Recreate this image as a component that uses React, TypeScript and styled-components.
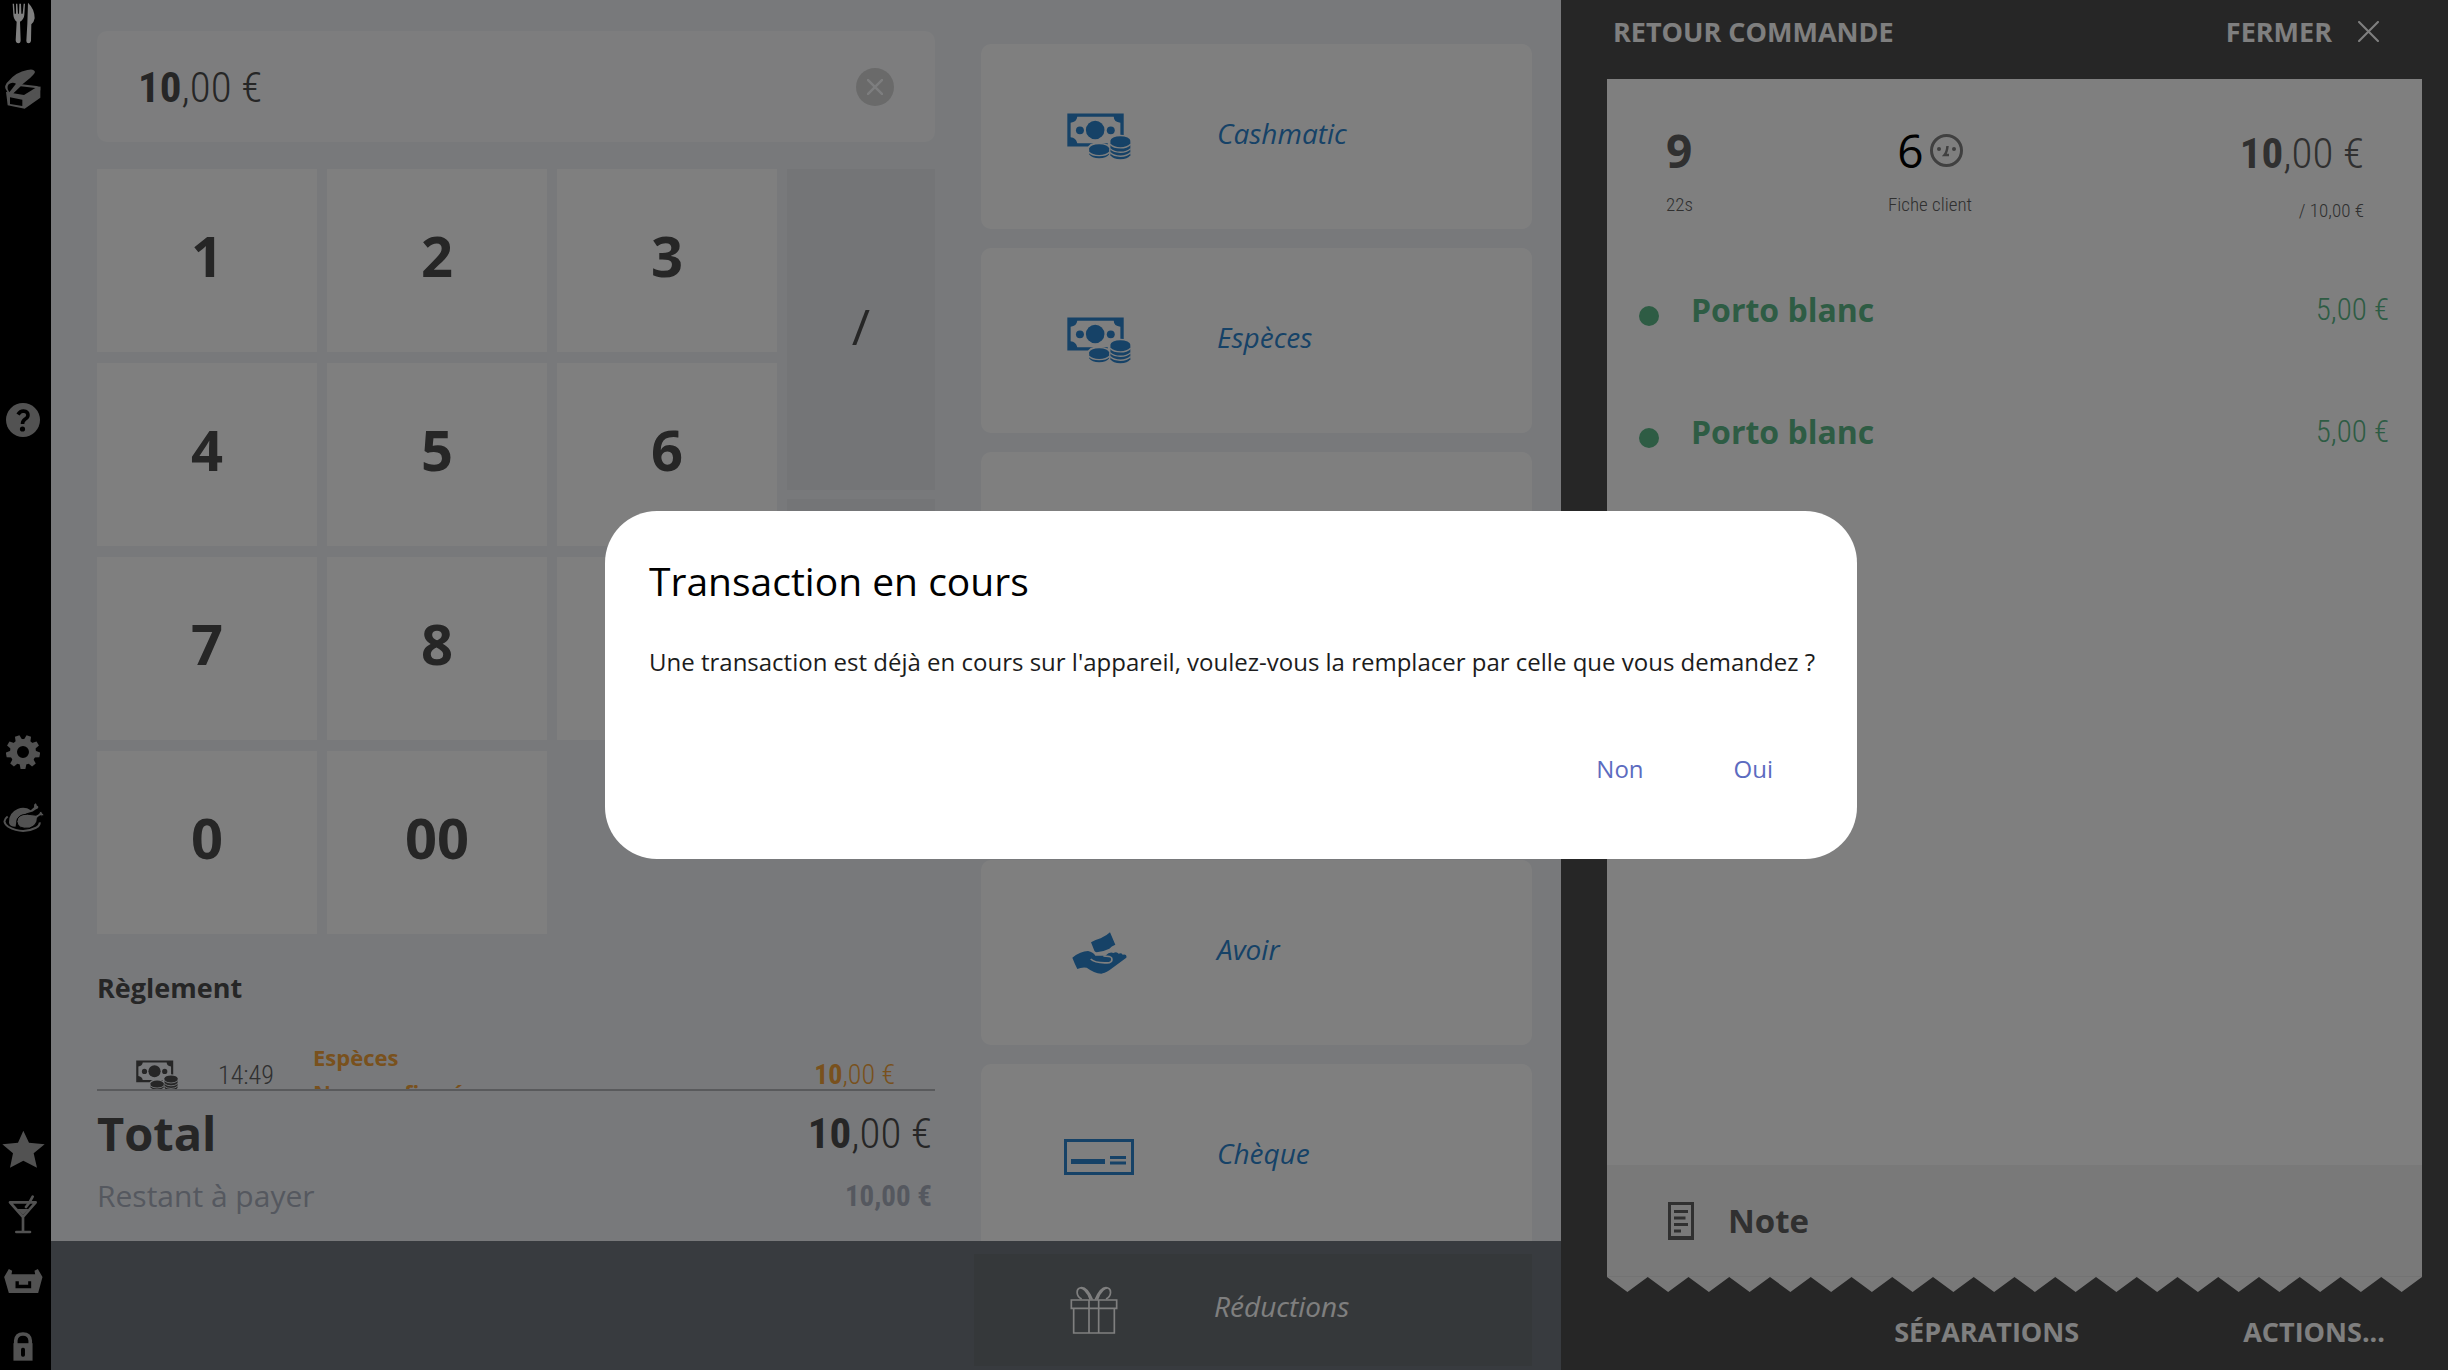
import React from "react";
import styled, { createGlobalStyle } from "styled-components";

const sans = '"Open Sans", "Noto Sans", sans-serif';
const narrow = '"Roboto Condensed", "Open Sans", sans-serif';

const colors = {
  ink: "#4c4c4c",
  inkSoft: "#606060",
  muted: "#808080",
  page: "#f0f3f7",
  panel: "#4c4c4c",
  blue: "#2c84ce",
  green: "#5cb888",
  orange: "#f2a23a",
  grey: "#a4a4a4",
};

const GlobalStyle = createGlobalStyle`
  *, *::before, *::after { box-sizing: border-box; }
  body { margin: 0; background: #000; font-family: ${sans}; color: ${colors.ink}; }
  button { font: inherit; color: inherit; border: 0; margin: 0; padding: 0; background: none; cursor: pointer; }
  b { font-weight: 700; }
  h2, p, ul { margin: 0; padding: 0; list-style: none; }
  svg { display: block; flex: none; }
`;

/* ---------- Layout ---------- */

const Screen = styled.div`
  display: grid;
  grid-template-columns: 51px minmax(0, 1fr) 887px;
  height: 100vh;
  overflow: hidden;
`;

const Rail = styled.nav`
  display: flex;
  flex-direction: column;
  justify-content: space-between;
  margin: -10px 0;
  padding-right: 5px;
  background: #000;
  color: ${colors.grey};
`;

const RailGroup = styled.div`
  display: flex;
  flex-direction: column;
`;

const RailButton = styled.button<{ $active?: boolean }>`
  display: flex;
  align-items: center;
  justify-content: center;
  height: 66px;
  color: ${(p) => (p.$active ? "#fff" : "inherit")};
`;

const Checkout = styled.main`
  display: grid;
  grid-template-rows: minmax(0, 1fr) 129px;
  min-height: 0;
  background: ${colors.page};
`;

const Columns = styled.div`
  display: grid;
  grid-template-columns: 838fr 551fr;
  grid-template-rows: minmax(0, 1fr);
  gap: 46px;
  padding: 0 29px 0 46px;
  min-height: 0;
`;

const Entry = styled.section`
  display: flex;
  flex-direction: column;
  min-height: 0;
  padding-top: 31px;
`;

const Display = styled.div`
  display: flex;
  align-items: center;
  justify-content: space-between;
  flex: none;
  height: 111px;
  padding: 0 41px;
  border-radius: 10px;
  background: #fafbfd;
`;

const Amount = styled.span<{ $size: number; $color?: string; $weight?: number }>`
  font-family: ${narrow};
  font-size: ${(p) => p.$size}px;
  font-weight: ${(p) => p.$weight ?? 300};
  line-height: 48px;
  white-space: nowrap;
  color: ${(p) => p.$color ?? colors.ink};
`;

const ClearButton = styled.button`
  display: flex;
  align-items: center;
  justify-content: center;
  width: 38px;
  height: 38px;
  border-radius: 50%;
  background: #d4d4d4;
  color: #fafbfd;
`;

const Keypad = styled.div`
  display: flex;
  flex: none;
  gap: 10px;
  margin-top: 27px;
`;

const Digits = styled.div`
  display: grid;
  flex: 680;
  grid-template-columns: repeat(3, 1fr);
  grid-auto-rows: 183px;
  gap: 11px 10px;
`;

const DigitKey = styled.button`
  background: #fff;
  font-size: 56px;
  font-weight: 700;
  line-height: 64px;
  padding-bottom: 12px;
`;

const SideKeys = styled.div`
  display: flex;
  flex: 148;
  flex-direction: column;
  gap: 9px;
`;

const SideKey = styled.button`
  height: 321px;
  padding-bottom: 8px;
  background: #e9ebef;
  font-size: 50px;
  font-weight: 400;
`;

const SectionTitle = styled.h2`
  flex: none;
  margin-top: 36px;
  font-size: 27px;
  line-height: 36px;
  font-weight: 700;
`;

const Payments = styled.ul`
  flex: 1;
  min-height: 0;
  overflow: hidden;
  border-bottom: 2px solid #b2b5b9;
`;

const Payment = styled.li`
  display: flex;
  align-items: center;
  gap: 40px;
  padding: 34px 40px 0 39px;
`;

const PaymentTime = styled.time`
  width: 55px;
  font-family: ${narrow};
  font-size: 26px;
  font-weight: 300;
  line-height: 36px;
  color: ${colors.inkSoft};
`;

const PaymentLabel = styled.div`
  flex: 1;
  font-size: 22px;
  font-weight: 700;
  line-height: 35px;
  color: ${colors.orange};
`;

const Totals = styled.div`
  flex: none;
  display: flex;
  flex-direction: column;
  gap: 13px;
  padding: 12px 3px 25px 0;
`;

const TotalRow = styled.div<{ $main?: boolean }>`
  display: flex;
  align-items: center;
  justify-content: space-between;
  height: ${(p) => (p.$main ? 60 : 40)}px;
  font-size: ${(p) => (p.$main ? 47 : 30)}px;
  font-weight: ${(p) => (p.$main ? 700 : 400)};
  line-height: ${(p) => (p.$main ? 60 : 40)}px;
  color: ${(p) => (p.$main ? colors.ink : "#aab0bf")};
`;

const Methods = styled.section`
  display: flex;
  flex-direction: column;
  gap: 19px;
  min-height: 0;
  overflow: hidden;
  padding-top: 44px;
`;

const MethodCard = styled.button`
  display: grid;
  flex: none;
  grid-template-columns: 236px 1fr;
  align-items: center;
  height: 185px;
  border-radius: 10px;
  background: #fff;
  color: ${colors.blue};
  text-align: left;
`;

const IconCell = styled.span`
  display: flex;
  justify-content: center;
`;

const MethodLabel = styled.span`
  padding-bottom: 8px;
  font-size: 28px;
  font-style: italic;
  line-height: 36px;
`;

const BottomBar = styled.footer`
  display: grid;
  grid-template-columns: 831fr 558fr;
  gap: 46px;
  padding: 13px 29px 4px 46px;
  background: #70767f;
`;

const DiscountButton = styled.button`
  display: grid;
  grid-column: 2;
  grid-template-columns: 240px 1fr;
  align-items: center;
  background: #6a7074;
  color: #fff;
  text-align: left;
`;

/* ---------- Order panel ---------- */

const OrderPanel = styled.aside`
  display: flex;
  flex-direction: column;
  min-height: 0;
  padding: 0 26px 0 46px;
  background: ${colors.panel};
`;

const PanelHeader = styled.header`
  display: flex;
  align-items: center;
  justify-content: space-between;
  flex: none;
  height: 63px;
  margin-bottom: 16px;
  padding: 0 43px 0 6px;
  color: #fff;
`;

const PanelButton = styled.button`
  display: flex;
  align-items: center;
  gap: 26px;
  font-size: 27px;
  font-weight: 700;
  line-height: 36px;
  white-space: nowrap;
`;

const Receipt = styled.section`
  display: flex;
  flex: 1;
  flex-direction: column;
  min-height: 0;
  background: #fff;
`;

const ReceiptHead = styled.div`
  display: grid;
  grid-template-columns: 223px 82px 1fr;
  padding: 47px 58px 26px 59px;
`;

const HeadCell = styled.div<{ $align?: string; $low?: boolean }>`
  display: flex;
  flex-direction: column;
  align-items: ${(p) => p.$align ?? "flex-start"};
  gap: ${(p) => (p.$low ? 22 : 19)}px;
  padding-top: ${(p) => (p.$low ? 3 : 0)}px;
`;

const HeadValue = styled.div<{ $strong?: boolean }>`
  display: flex;
  align-items: center;
  gap: 6px;
  font-size: 46px;
  font-weight: ${(p) => (p.$strong ? 700 : 400)};
  line-height: 48px;
  color: ${(p) => (p.$strong ? colors.inkSoft : "#000")};
`;

const HeadNote = styled.span`
  font-family: ${narrow};
  font-size: 19px;
  font-weight: 300;
  line-height: 24px;
  white-space: nowrap;
  color: ${colors.inkSoft};
`;

const Lines = styled.ul`
  flex: 1;
  min-height: 0;
`;

const Line = styled.li`
  display: flex;
  align-items: center;
  height: 122px;
  padding: 0 33px 0 32px;
  color: ${colors.green};
`;

const Dot = styled.span`
  width: 20px;
  height: 20px;
  margin: 12px 32px 0 0;
  border-radius: 50%;
  background: currentColor;
`;

const LineName = styled.span`
  flex: 1;
  font-size: 32px;
  font-weight: 700;
  line-height: 42px;
`;

const NoteButton = styled.button`
  display: flex;
  align-items: center;
  flex: none;
  gap: 34px;
  height: 112px;
  padding-left: 61px;
  border-bottom: 1px solid #e6e6e6;
  background: #f2f2f2;
  color: ${colors.inkSoft};
  font-size: 33px;
  font-weight: 700;
  line-height: 42px;
`;

const PanelFooter = styled.footer`
  display: flex;
  align-items: center;
  justify-content: flex-end;
  flex: none;
  gap: 164px;
  height: 78px;
  padding: 2px 37px 0 0;
  color: #fff;
`;

/* ---------- Dialog ---------- */

const Backdrop = styled.div`
  position: fixed;
  inset: 0;
  display: flex;
  align-items: center;
  justify-content: center;
  padding-left: 14px;
  background: rgba(0, 0, 0, 0.5);
`;

const Dialog = styled.div`
  width: 1252px;
  padding: 40px 44px 66px;
  border-radius: 52px;
  background: #fff;
  color: #000;
`;

const DialogTitle = styled.h2`
  font-size: 39px;
  font-weight: 400;
  line-height: 60px;
`;

const DialogText = styled.p`
  margin-top: 33px;
  font-size: 24px;
  line-height: 36px;
  white-space: nowrap;
  color: #1c1c1c;
`;

const DialogActions = styled.div`
  display: flex;
  justify-content: flex-end;
  gap: 10px;
  margin-top: 65px;
`;

const DialogButton = styled.button`
  height: 48px;
  padding: 0 40px;
  font-size: 24px;
  line-height: 48px;
  color: #5c6bc0;
`;

/* ---------- Icons ---------- */

const CutleryIcon = () => (
  <svg width="23" height="42" viewBox="36 7 69 126" fill="currentColor">
    <path d="M38 12L40 45Q41 59 50 66L47 122Q48 131 55 131Q62 131 62 122L60 66Q72 59 73 45L75 12H71L68 42H64L63 12H58L57 42H54L52 12H48V42H44L42 12Z" />
    <path d="M84 9Q104 28 104 56Q102 68 94 74L93 124Q91 131 86 131Q79 131 79 124L82 72Z" />
  </svg>
);

const BoxIcon = () => (
  <svg width="36" height="40" viewBox="17 206 108 120">
    <path d="M20 274L76 290L123 258V292L76 325L25 315Z" fill="currentColor" />
    <path d="M24 268L66 252L112 257L123 260V270L76 296L24 284Z" fill="currentColor" />
    <path d="M42 279L64 258L108 263L74 284Z" fill="#000" />
    <path d="M32 291L69 298V317L32 311Z" fill="#000" />
    <path d="M28 242Q50 215 84 209Q104 204 107 215Q104 224 84 240L64 256L36 284Q14 268 18 256Q20 248 28 242Z" fill="currentColor" />
    <path d="M30 276Q20 262 28 252Q38 244 50 250Z" fill="#000" />
  </svg>
);

const HelpIcon = () => (
  <svg width="34" height="34" viewBox="0 0 34 34">
    <circle cx="17" cy="17" r="17" fill="currentColor" />
    <path d="M12 11.5Q14 8 17.500 8Q22 8.300 22 12Q22 14.500 19 16.300Q16.500 18 16.500 21" fill="none" stroke="#000" strokeWidth="3.600" />
    <circle cx="16.500" cy="26" r="2.600" fill="#000" />
  </svg>
);

const GearIcon = () => (
  <svg width="34" height="34" viewBox="-17 -17 34 34">
    {[0, 1, 2, 3, 4, 5, 6, 7, 8].map((i) => (
      <path key={i} d="M-3.800 10H3.800L2.400 17H-2.400Z" fill="currentColor" transform={`rotate(${i * 40})`} />
    ))}
    <circle r="9.500" fill="none" stroke="currentColor" strokeWidth="7" />
  </svg>
);

const ChickenIcon = () => (
  <svg width="41" height="31" viewBox="8 1264 124 92">
    <path d="M22 1307Q2 1322 24 1338Q66 1362 108 1341Q120 1334 119 1325" fill="none" stroke="currentColor" strokeWidth="6" />
    <path d="M26 1326Q24 1296 52 1284Q74 1276 92 1288L102 1279Q100 1270 106 1267Q110 1268 110 1274Q118 1277 113 1283Q108 1284 98 1292L80 1297L50 1314L46 1338Q28 1338 26 1326Z" fill="currentColor" />
    <path d="M50 1322Q52 1300 82 1300Q98 1302 108 1303L117 1298Q117 1290 124 1291Q126 1296 131 1301Q130 1308 120 1305L112 1311Q112 1334 88 1342Q52 1346 50 1322Z" fill="currentColor" stroke="#000" strokeWidth="3" />
  </svg>
);

const StarIcon = () => (
  <svg width="43" height="38" viewBox="6 28 129 114">
    <path d="M70 30L87 66L134 71L101 98L111 141L70 120L30 141L39 98L7 71L54 66Z" fill="currentColor" />
  </svg>
);

const CocktailIcon = () => (
  <svg width="30" height="39" viewBox="26 224 90 117" fill="none" stroke="currentColor" strokeWidth="8" strokeLinecap="round" strokeLinejoin="round">
    <path d="M32 246H109L71 290ZM71 290V334M51 335H92" />
    <path d="M100 229L90 247L80 260" />
    <path d="M54 266H88L71 284Z" fill="currentColor" stroke="none" />
  </svg>
);

const BasketIcon = () => (
  <svg width="39" height="24" viewBox="13 446 116 72">
    <path d="M13 470L27 446L37 451L35 462H106L104 451L114 446L128 470L115 518H27Z" fill="currentColor" />
    <path d="M47 483H57V493H85V483H94V504H47Z" fill="#000" />
  </svg>
);

const LockIcon = () => (
  <svg width="20" height="29" viewBox="41 636 60 88">
    <path d="M49 674V662Q51 642 71 642Q91 642 93 662V674" fill="none" stroke="currentColor" strokeWidth="11" />
    <path d="M42 670H100V723H42Z" fill="currentColor" />
    <rect x="65" y="684" width="12" height="27" rx="5" fill="#000" />
  </svg>
);

const CrossIcon = ({ size, weight }: { size: number; weight: number }) => (
  <svg width={size} height={size} viewBox="0 0 20 20" stroke="currentColor" strokeWidth={weight} strokeLinecap="round">
    <path d="M1 1L19 19M19 1L1 19" />
  </svg>
);

const CashIcon = ({ width = 64, paper = "#fff" }: { width?: number; paper?: string }) => (
  <svg width={width} height={Math.round((width * 47) / 64)} viewBox="51 39 193 141">
    <path d="M52 40H222V140H52Z" fill="currentColor" />
    <path d="M82 50H192Q192 66 212 68V112Q196 112 192 130H82Q78 114 62 112V68Q80 66 82 50Z" fill={paper} />
    <circle cx="136" cy="90" r="28" fill="currentColor" />
    <circle cx="90" cy="91" r="12" fill="currentColor" />
    <circle cx="183" cy="91" r="12" fill="currentColor" />
    <path d="M174 122Q178 104 212 104Q240 104 250 122V182H112V146Q118 126 148 128Q164 128 174 134Z" fill={paper} />
    <path d="M182 124V166Q190 178 212 178T242 166V124Z" fill="currentColor" />
    <path d="M118 146V164Q126 175 148 175T178 164V146Z" fill="currentColor" />
    <g fill="none" stroke={paper} strokeWidth="4">
      <path d="M181 133Q192 144 212 144T243 133M181 146Q192 157 212 157T243 146M181 158Q192 169 212 169T243 158" />
      <path d="M117 157Q126 167 148 167T179 157" />
    </g>
    <ellipse cx="212" cy="122" rx="30" ry="13" fill="currentColor" />
    <ellipse cx="148" cy="146" rx="30" ry="13" fill="currentColor" />
  </svg>
);

const VoucherIcon = () => (
  <svg width="55" height="42" viewBox="64 61 165 126">
    <path d="M121 92Q134 84 150 80Q168 72 178 62L194 99Q182 104 176 111Q160 119 138 122Q132 122 129 112Z" fill="currentColor" />
    <path d="M65 138Q90 118 112 118Q128 122 134 132H164Q178 118 188 124Q198 118 204 126Q212 122 216 129Q230 126 227 138L176 176Q160 186 152 186Q130 184 108 168Q92 166 80 172Q72 156 65 138Z" fill="currentColor" />
    <path d="M120 142Q134 156 176 153Q186 150 183 139Q180 133 158 133" fill="none" stroke="#fff" strokeWidth="5" />
  </svg>
);

const ChequeIcon = () => (
  <svg width="70" height="36" viewBox="0 0 70 36" fill="none" stroke="currentColor">
    <rect x="1.500" y="1.500" width="67" height="33" strokeWidth="3" />
    <path d="M7 22.500H41" strokeWidth="5" />
    <path d="M46 18.500H62M46 24H62" strokeWidth="3" />
  </svg>
);

const GiftIcon = () => (
  <svg width="48" height="48" viewBox="61 1129 144 144" fill="none" stroke="currentColor" strokeWidth="5">
    <path d="M65 1171H201V1196H65ZM72 1196V1270H194V1196M118 1171V1270M147 1171V1270" />
    <path d="M122 1170C112 1142 98 1134 90 1135C80 1138 78 1160 96 1168M128 1170C118 1146 104 1130 90 1135" />
    <path d="M143 1170C153 1142 167 1134 175 1135C185 1138 187 1160 169 1168M137 1170C147 1146 161 1130 175 1135" />
  </svg>
);

const GuestIcon = () => (
  <svg width="33" height="33" viewBox="0 0 33 33" fill="none" stroke={colors.muted} strokeWidth="3">
    <circle cx="16.500" cy="16.500" r="15" />
    <path d="M17.500 12Q17 18 14.500 21H19" strokeWidth="2.500" />
    <circle cx="9" cy="15" r="2" fill={colors.muted} stroke="none" />
    <circle cx="24" cy="15" r="2" fill={colors.muted} stroke="none" />
  </svg>
);

const NoteIcon = () => (
  <svg width="26" height="38" viewBox="0 0 26 38" fill="none" stroke="currentColor">
    <path d="M1.500 1.500H24.500V36H1.500Z" strokeWidth="3" />
    <path d="M0 36H26" strokeWidth="4" />
    <path d="M6 9.500H20M6 16H17.500M6 22.500H20M6 29H13" strokeWidth="3" />
  </svg>
);

const TornEdge = () => {
  const teeth = Array.from({ length: 20 }, (_, i) => `L${i * 2 + 1} 1L${i * 2 + 2} 0`).join("");
  return (
    <svg width="100%" height="15" viewBox="0 0 40 1" preserveAspectRatio="none">
      <path d={`M0 0${teeth}Z`} fill="#f2f2f2" />
    </svg>
  );
};

/* ---------- Screen content ---------- */

const railGroups = [
  [
    { name: "Service", Icon: CutleryIcon, active: true },
    { name: "Tiroir-caisse", Icon: BoxIcon },
  ],
  [{ name: "Aide", Icon: HelpIcon }],
  [
    { name: "Réglages", Icon: GearIcon },
    { name: "Plats", Icon: ChickenIcon },
  ],
  [
    { name: "Favoris", Icon: StarIcon },
    { name: "Boissons", Icon: CocktailIcon },
    { name: "À emporter", Icon: BasketIcon },
    { name: "Verrouiller", Icon: LockIcon },
  ],
];

const methods = [
  { label: "Cashmatic", icon: <CashIcon /> },
  { label: "Espèces", icon: <CashIcon /> },
  { label: "", icon: null },
  { label: "", icon: null },
  { label: "Avoir", icon: <VoucherIcon /> },
  { label: "Chèque", icon: <ChequeIcon /> },
];

const digits = ["1", "2", "3", "4", "5", "6", "7", "8", "9", "0", "00"];

const orderLines = [
  { id: 1, name: "Porto blanc", price: "5,00 €" },
  { id: 2, name: "Porto blanc", price: "5,00 €" },
];

export default function App() {
  return (
    <>
      <GlobalStyle />
      <Screen>
        <Rail>
          {railGroups.map((group, i) => (
            <RailGroup key={i}>
              {group.map(({ name, Icon, active }: any) => (
                <RailButton key={name} aria-label={name} $active={active}>
                  <Icon />
                </RailButton>
              ))}
            </RailGroup>
          ))}
        </Rail>

        <Checkout>
          <Columns>
            <Entry>
              <Display>
                <Amount $size={43}>
                  <b>10</b>,00 €
                </Amount>
                <ClearButton aria-label="Effacer">
                  <CrossIcon size={16} weight={3} />
                </ClearButton>
              </Display>
              <Keypad>
                <Digits>
                  {digits.map((d) => (
                    <DigitKey key={d}>{d}</DigitKey>
                  ))}
                </Digits>
                <SideKeys>
                  <SideKey>/</SideKey>
                  <SideKey aria-label="Valider" />
                </SideKeys>
              </Keypad>
              <SectionTitle>Règlement</SectionTitle>
              <Payments>
                <Payment>
                  <CashIcon width={42} paper={colors.page} />
                  <PaymentTime>14:49</PaymentTime>
                  <PaymentLabel>
                    Espèces
                    <br />
                    Non confirmé
                  </PaymentLabel>
                  <Amount $size={28} $color={colors.orange}>
                    <b>10</b>,00 €
                  </Amount>
                </Payment>
              </Payments>
              <Totals>
                <TotalRow $main>
                  <span>Total</span>
                  <Amount $size={43}>
                    <b>10</b>,00 €
                  </Amount>
                </TotalRow>
                <TotalRow>
                  <span>Restant à payer</span>
                  <Amount $size={29} $weight={700} $color="#aab0bf">
                    10,00 €
                  </Amount>
                </TotalRow>
              </Totals>
            </Entry>

            <Methods>
              {methods.map((m, i) => (
                <MethodCard key={i} aria-label={m.label || "Autre règlement"}>
                  <IconCell>{m.icon}</IconCell>
                  <MethodLabel>{m.label}</MethodLabel>
                </MethodCard>
              ))}
            </Methods>
          </Columns>
          <BottomBar>
            <DiscountButton>
              <IconCell>
                <GiftIcon />
              </IconCell>
              <MethodLabel>Réductions</MethodLabel>
            </DiscountButton>
          </BottomBar>
        </Checkout>

        <OrderPanel>
          <PanelHeader>
            <PanelButton>RETOUR COMMANDE</PanelButton>
            <PanelButton>
              FERMER
              <CrossIcon size={21} weight={2} />
            </PanelButton>
          </PanelHeader>
          <Receipt>
            <ReceiptHead>
              <HeadCell>
                <HeadValue $strong>9</HeadValue>
                <HeadNote>22s</HeadNote>
              </HeadCell>
              <HeadCell $align="center">
                <HeadValue>
                  6<GuestIcon />
                </HeadValue>
                <HeadNote>Fiche client</HeadNote>
              </HeadCell>
              <HeadCell $align="flex-end" $low>
                <Amount $size={43} $color={colors.inkSoft}>
                  <b>10</b>,00 €
                </Amount>
                <HeadNote>/ 10,00 €</HeadNote>
              </HeadCell>
            </ReceiptHead>
            <Lines>
              {orderLines.map((line) => (
                <Line key={line.id}>
                  <Dot />
                  <LineName>{line.name}</LineName>
                  <Amount $size={31} $color={colors.green}>
                    {line.price}
                  </Amount>
                </Line>
              ))}
            </Lines>
            <NoteButton>
              <NoteIcon />
              Note
            </NoteButton>
          </Receipt>
          <TornEdge />
          <PanelFooter>
            <PanelButton>SÉPARATIONS</PanelButton>
            <PanelButton>ACTIONS...</PanelButton>
          </PanelFooter>
        </OrderPanel>
      </Screen>

      <Backdrop>
        <Dialog role="dialog" aria-modal="true" aria-labelledby="dialog-title">
          <DialogTitle id="dialog-title">Transaction en cours</DialogTitle>
          <DialogText>
            Une transaction est déjà en cours sur l'appareil, voulez-vous la remplacer par celle que vous demandez ?
          </DialogText>
          <DialogActions>
            <DialogButton>Non</DialogButton>
            <DialogButton>Oui</DialogButton>
          </DialogActions>
        </Dialog>
      </Backdrop>
    </>
  );
}
